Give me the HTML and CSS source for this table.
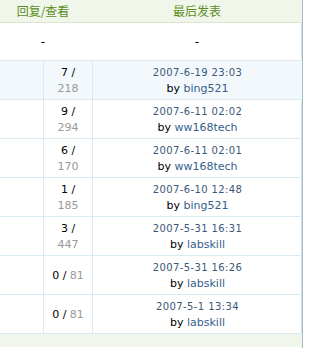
FILE: index.html
```html
<!DOCTYPE html>
<html>
<head>
<meta charset="utf-8">
<link rel="stylesheet" href="styles.css">
</head>
<body>
<div class="board">
  <div class="head">
    <div class="h1">回复/查看</div>
    <div class="h2">最后发表</div>
  </div>
  <div class="dash">
    <div class="d1">-</div>
    <div class="d2">-</div>
  </div>
  <div class="row hl">
    <div class="c1"></div>
    <div class="c2"><div>7 /<br><span class="views">218</span></div></div>
    <div class="c3"><div><a class="date">2007-6-19 23:03</a><br>by <a class="user">bing521</a></div></div>
  </div>
  <div class="row">
    <div class="c1"></div>
    <div class="c2"><div>9 /<br><span class="views">294</span></div></div>
    <div class="c3"><div><a class="date">2007-6-11 02:02</a><br>by <a class="user">ww168tech</a></div></div>
  </div>
  <div class="row">
    <div class="c1"></div>
    <div class="c2"><div>6 /<br><span class="views">170</span></div></div>
    <div class="c3"><div><a class="date">2007-6-11 02:01</a><br>by <a class="user">ww168tech</a></div></div>
  </div>
  <div class="row">
    <div class="c1"></div>
    <div class="c2"><div>1 /<br><span class="views">185</span></div></div>
    <div class="c3"><div><a class="date">2007-6-10 12:48</a><br>by <a class="user">bing521</a></div></div>
  </div>
  <div class="row">
    <div class="c1"></div>
    <div class="c2"><div>3 /<br><span class="views">447</span></div></div>
    <div class="c3"><div><a class="date">2007-5-31 16:31</a><br>by <a class="user">labskill</a></div></div>
  </div>
  <div class="row">
    <div class="c1"></div>
    <div class="c2"><div>0 / <span class="views">81</span></div></div>
    <div class="c3"><div><a class="date">2007-5-31 16:26</a><br>by <a class="user">labskill</a></div></div>
  </div>
  <div class="row">
    <div class="c1"></div>
    <div class="c2"><div>0 / <span class="views">81</span></div></div>
    <div class="c3"><div><a class="date">2007-5-1 13:34</a><br>by <a class="user">labskill</a></div></div>
  </div>
  <div class="foot"></div>
</div>
</body>
</html>
```

FILE: styles.css
```css
html, body {
  margin: 0;
  padding: 0;
  background: #ffffff;
}

body {
  font-family: "DejaVu Sans", Verdana, sans-serif;
  font-size: 11px;
  color: #000000;
}

.board {
  width: 302px;
  border-right: 1px solid #a3bcc8;
  box-shadow: inset -1px 0 0 #d3e2ea;
  height: 348px;
}

.head {
  display: grid;
  grid-template-columns: 86px 1fr;
  height: 23px;
  background: #f0f6e9;
  border-bottom: 1px solid #dbe5d2;
  box-sizing: border-box;
  color: #5b8c24;
  font-family: "Noto Sans CJK SC", sans-serif;
  font-size: 12px;
  line-height: 22px;
}

.head .h1,
.dash .d1 {
  text-align: center;
}

.head .h2,
.dash .d2 {
  text-align: center;
  padding-left: 7px;
  padding-right: 1px;
}

.dash {
  display: grid;
  grid-template-columns: 86px 1fr;
  height: 38px;
  border-bottom: 1px solid #dde9ef;
  box-sizing: border-box;
  align-items: center;
  font-size: 12px;
}

.row {
  display: grid;
  grid-template-columns: 44px 49px 1fr;
  height: 39px;
  border-bottom: 1px solid #d9eaf2;
  box-sizing: border-box;
  line-height: 16px;
}

.row.hl {
  background: #f2f8fc;
}

.c1,
.c2,
.c3 {
  display: flex;
  flex-direction: column;
  justify-content: center;
  text-align: center;
}

.c1,
.c2 {
  border-right: 1px solid #d9eaf2;
}

.c2 {
  padding-top: 2px;
}

.views {
  color: #999999;
}

.c3 {
  padding-top: 1px;
}

.date {
  color: #3a5878;
  font-size: 10px;
  letter-spacing: 0.4px;
  line-height: 14px;
}

.user {
  color: #335f8b;
}

.foot {
  height: 13px;
  background: #f0f6ec;
}
```
